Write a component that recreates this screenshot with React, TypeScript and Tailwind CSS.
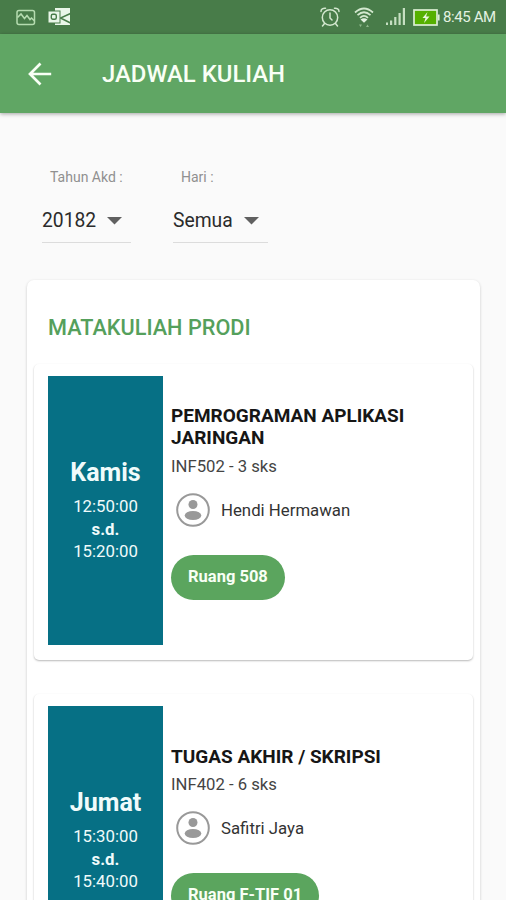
type Course = {
  day: string;
  start: string;
  end: string;
  title: string;
  code: string;
  lecturer: string;
  room: string;
};

const courses: Course[] = [
  {
    day: 'Kamis',
    start: '12:50:00',
    end: '15:20:00',
    title: 'PEMROGRAMAN APLIKASI JARINGAN',
    code: 'INF502 - 3 sks',
    lecturer: 'Hendi Hermawan',
    room: 'Ruang 508',
  },
  {
    day: 'Jumat',
    start: '15:30:00',
    end: '15:40:00',
    title: 'TUGAS AKHIR / SKRIPSI',
    code: 'INF402 - 6 sks',
    lecturer: 'Safitri Jaya',
    room: 'Ruang F-TIF 01',
  },
];

function StatusBar() {
  return (
    <div className="flex h-[34px] shrink-0 items-center bg-[#487c49] pl-4 pr-[11px] text-[#e4f2e2]">
      <svg width="20" height="17" viewBox="0 0 20 17" fill="none" stroke="#b5dcb0" strokeWidth="1.5">
        <rect x="1" y="1.5" width="17.5" height="14" rx="2" />
        <path d="M1.5 8.5L5 5l3.500 4.500L11 6.500l3 4 1.500-1.500 3 3" />
      </svg>
      <svg className="ml-3" width="24" height="18" viewBox="0 0 24 18">
        <path d="M7 0h15v17H7z" fill="#e9f6e8" />
        <path d="M22.500 5.500L12.500 10l10 5" fill="none" stroke="#487c49" strokeWidth="1.500" />
        <rect x="0" y="3" width="12" height="12" fill="#e9f6e8" stroke="#487c49" />
        <rect x="3.300" y="6.200" width="5" height="5" rx="1.500" fill="none" stroke="#487c49" strokeWidth="1.400" />
      </svg>
      <svg className="ml-auto" width="20" height="20" viewBox="0 0 20 20" fill="none" stroke="#d3e8cf" strokeWidth="1.500" strokeLinecap="round">
        <circle cx="10" cy="10.500" r="7.700" />
        <path d="M10 6v5l2 2M1 4.500C1 2 3 1 5.500 1.200M19 4.500C19 2 17 1 14.500 1.200M4.500 16.500L2.500 19M15.500 16.500l2 2.500" />
      </svg>
      <svg className="ml-[14px]" width="20" height="21" viewBox="0 0 20 21" fill="none" stroke="#d3e8cf" strokeWidth="1.700">
        <path d="M1 5.500Q10-2.500 19 5.500M3.500 8.200Q10 2.300 16.500 8.200M6 10.800Q10 7 14 10.800" />
        <path d="M6.500 12.500Q10 10 13.500 12.500L10 15.800z" fill="#e4f2e2" stroke="none" />
        <path d="M5 17.500h3l-1.500 2.500zM12 20h3l-1.500-2.500z" fill="#8db88b" stroke="none" />
      </svg>
      <svg className="ml-[11px]" width="21" height="18" viewBox="0 0 21 18" fill="#c6dfc2">
        <path d="M1 14.500h2V17H1zM5 12.500h2.200V17H5zM9.200 9h2.200v8H9.200zM13.500 5h2.200v12h-2.200zM17.800 0H20v17h-2.200z" />
      </svg>
      <svg className="ml-[7px]" width="27" height="17" viewBox="0 0 27 17">
        <rect x="1" y="1" width="23" height="15" fill="#55b000" stroke="#dcefd4" strokeWidth="1.700" />
        <path d="M25 5.500h1.600v6H25z" fill="#dcefd4" />
        <path d="M14.500 3L9.500 9h3l-1.500 5 5.500-6.500h-3.500z" fill="#e9f6dd" />
      </svg>
      <span className="ml-[3px] w-[52px] whitespace-nowrap pt-px text-[15px] tracking-[-0.4px]">8:45 AM</span>
    </div>
  );
}

function AppBar() {
  return (
    <header className="flex h-[79px] shrink-0 items-center bg-[#60a664] pl-7 text-[#f8fff5] shadow-[0_1px_4px_rgba(0,0,0,0.35)]">
      <svg width="24" height="24" viewBox="0 0 24 24" fill="none" stroke="currentColor" strokeWidth="2.700">
        <path d="M23.200 12H2.500M12.500 1.500L2 12l10.500 10.500" />
      </svg>
      <h1 className="ml-[50px] text-[23.900px] font-medium leading-7">JADWAL KULIAH</h1>
    </header>
  );
}

function Select({ label, value, className }: { label: string; value: string; className: string }) {
  return (
    <div className={className}>
      <p className="pl-2 text-[14px] leading-5 text-[#909090]">{label}</p>
      <div className="mt-[19px] flex h-[37px] items-center justify-between border-b border-[#dcdcdc] pb-1.5 pr-[9px]">
        <span className="text-[19.300px] leading-6 text-[#2b2b2b]">{value}</span>
        <svg width="15" height="8" viewBox="0 0 15 8" fill="#606060">
          <path d="M0 0h15L7.500 7.500z" />
        </svg>
      </div>
    </div>
  );
}

function Avatar() {
  return (
    <svg width="34" height="34" viewBox="0 0 34 34" fill="#999999">
      <circle cx="17" cy="17" r="15.800" fill="none" stroke="#999999" strokeWidth="2" />
      <circle cx="17" cy="11.500" r="4.500" />
      <ellipse cx="17" cy="22.500" rx="8.300" ry="4.500" />
    </svg>
  );
}

function CourseCard({ course }: { course: Course }) {
  return (
    <article className="flex h-[296px] rounded-[5px] bg-white px-[14px] pb-[15px] pt-3 shadow-[0_1px_2px_rgba(0,0,0,0.28)]">
      <div className="flex w-[115px] shrink-0 flex-col items-center justify-center bg-[#067085] pb-px text-[#f0fbfb]">
        <p className="text-[25px] font-bold leading-8">{course.day}</p>
        <p className="mt-[6px] text-[16.800px] leading-[22.500px]">{course.start}</p>
        <p className="text-[16.800px] font-bold leading-[22.500px]">s.d.</p>
        <p className="text-[16.800px] leading-[22.500px]">{course.end}</p>
      </div>
      <div className="flex flex-1 flex-col items-start justify-center pb-[17px] pl-2">
        <h3 className="w-[250px] text-[19px] font-bold leading-[22.500px] text-[#161616]">{course.title}</h3>
        <p className="mt-[5px] text-[16.700px] leading-6 text-[#444444]">{course.code}</p>
        <div className="mt-[14px] flex items-center pl-[5px]">
          <Avatar />
          <p className="ml-[11px] text-[16.800px] leading-6 text-[#333333]">{course.lecturer}</p>
        </div>
        <span className="mt-7 flex h-[45px] items-center rounded-full bg-[#5ba55e] px-[17px] text-[16.500px] font-bold text-[#f8fff5]">
          {course.room}
        </span>
      </div>
    </article>
  );
}

export default function App() {
  return (
    <div className="flex h-[900px] w-[506px] flex-col overflow-hidden bg-[#fafafa] font-[Roboto,sans-serif]">
      <StatusBar />
      <AppBar />
      <div className="mt-[54px] flex shrink-0 pl-[42px]">
        <Select label="Tahun Akd :" value="20182" className="w-[89px]" />
        <Select label="Hari :" value="Semua" className="ml-[42px] w-[95px]" />
      </div>
      <main className="ml-[27px] mt-[37px] w-[453px] shrink-0 rounded-[7px] bg-white px-[7px] shadow-[0_1px_3px_rgba(0,0,0,0.2)]">
        <h2 className="pl-[14px] pt-[34px] text-[21.700px] font-medium leading-7 text-[#55a05c]">MATAKULIAH PRODI</h2>
        <div className="mt-[22px] flex flex-col gap-[34px]">
          {courses.map((course) => (
            <CourseCard key={course.code} course={course} />
          ))}
        </div>
      </main>
    </div>
  );
}
